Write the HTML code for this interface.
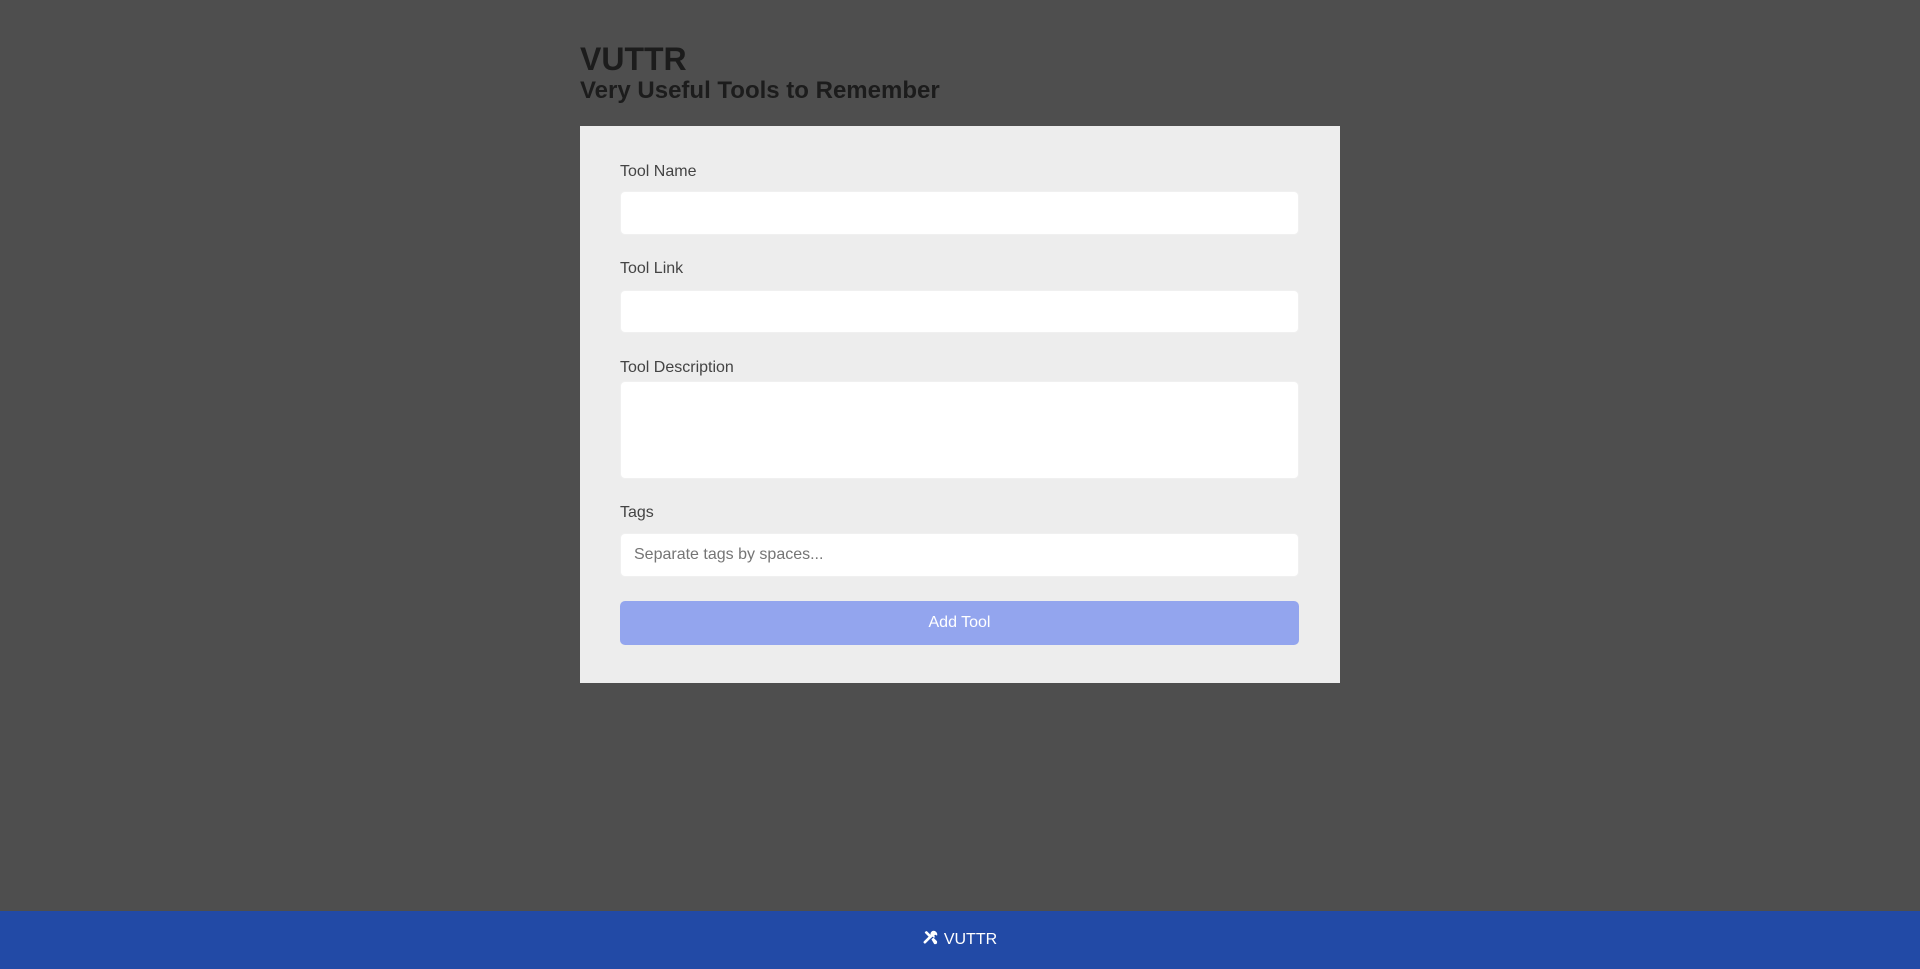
<!DOCTYPE html>
<html><head><meta charset="utf-8"><style>
*{box-sizing:border-box;margin:0;padding:0}
body{width:1920px;height:969px;background:#4e4e4e;font-family:"Liberation Sans",Arial,sans-serif;position:relative;overflow:hidden}
h1{position:absolute;left:580px;top:40px;font-size:32px;color:#1c1c1c;font-weight:bold;line-height:38px}
h2{position:absolute;left:580px;top:77px;font-size:24px;color:#1c1c1c;font-weight:bold;line-height:28px}
.card{position:absolute;left:580px;top:126px;width:760px;height:557px;background:#ededed}
.l{position:absolute;left:40px;font-size:16px;color:#444}
.i{position:absolute;left:40px;width:679px;background:#fff;border-radius:5px;border:1px solid #f0f0f0}
.ph{font-size:16px;color:#757575;padding-left:13px;line-height:42px}
.btn{position:absolute;left:40px;top:475px;width:679px;height:44px;background:#93a5ee;border-radius:5px;color:#fff;font-size:16px;text-align:center;line-height:44px}
footer{position:absolute;left:0;top:911px;width:1920px;height:58px;background:#224aa6;color:#fff;font-size:16px;text-align:center;line-height:58px}
</style></head><body>
<h1>VUTTR</h1>
<h2>Very Useful Tools to Remember</h2>
<div class="card">
<div class="l" style="top:37px">Tool Name</div>
<div class="i" style="top:65px;height:44px"></div>
<div class="l" style="top:134px">Tool Link</div>
<div class="i" style="top:164px;height:43px"></div>
<div class="l" style="top:233px">Tool Description</div>
<div class="i" style="top:255px;height:98px"></div>
<div class="l" style="top:378px">Tags</div>
<div class="i ph" style="top:407px;height:44px">Separate tags by spaces...</div>
<div class="btn">Add Tool</div>
</div>
<footer><svg width="15" height="15" viewBox="0 0 16 16" style="vertical-align:-1px;margin-right:6px"><path d="M2 2l2-1 6 6-2 2-6-6z M9 10l2-2 4 4v2l-1 1h-2z" fill="#fff"/><path d="M10 1a4 4 0 0 1 5 5l-2-1-1 1 1 2a4 4 0 0 1-3-1L3 14a1.4 1.4 0 0 1-2-2l7-7a4 4 0 0 1 2-4z" fill="#fff"/></svg>VUTTR</footer>
</body></html>
